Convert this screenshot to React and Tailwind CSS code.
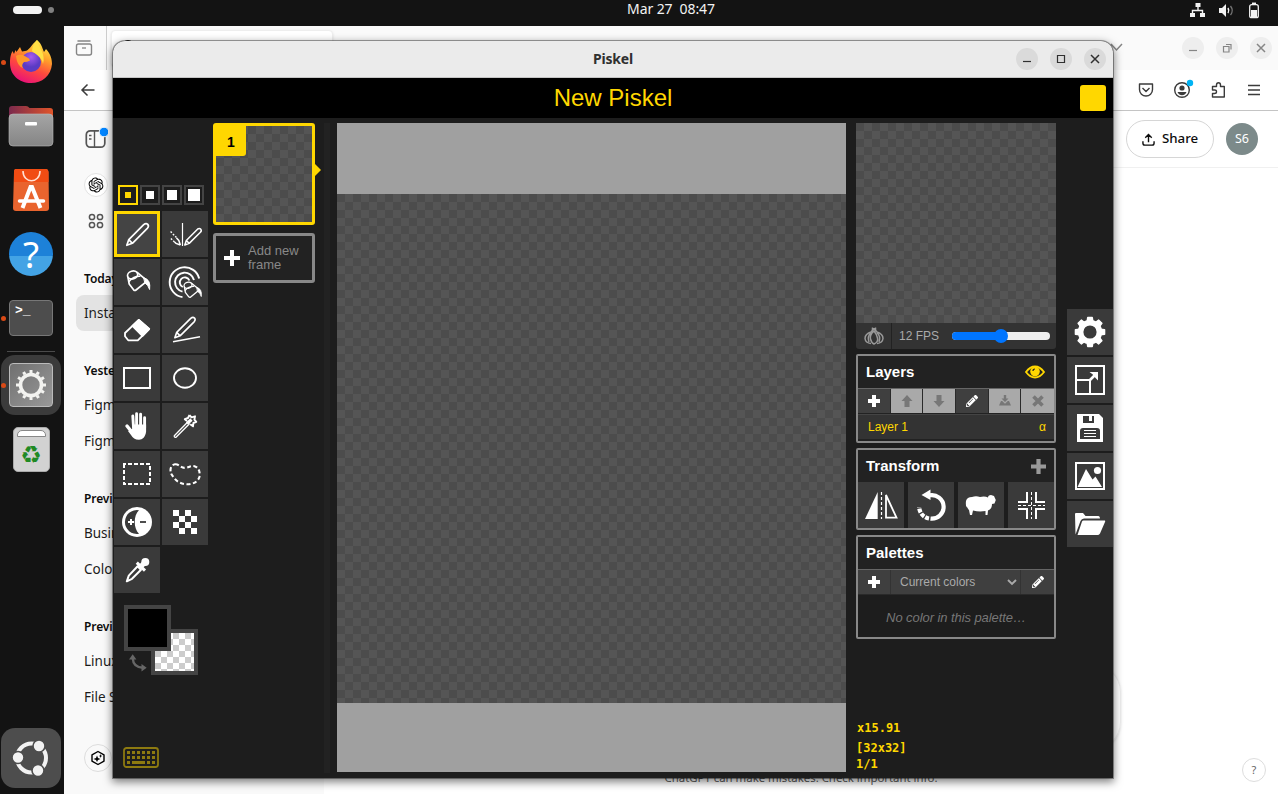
import React from 'react';
import { FaPencilAlt } from 'react-icons/fa';
import { RiOpenaiFill } from 'react-icons/ri';

const CHECK = 'bg-[conic-gradient(#555555_25%,#4c4c4c_0_50%,#555555_0_75%,#4c4c4c_0)] bg-[length:16px_16px]';

function Glyph({ size = 46, w, h, box, className = '', children }) {
  return (
    <svg width={w || size} height={h || size} viewBox={box || `0 0 ${w || size} ${h || size}`} fill="none" stroke="currentColor" className={`block shrink-0 ${className}`}>
      {children}
    </svg>
  );
}

const plus = <Glyph size={12}><path d="M6 0V12M0 6H12" strokeWidth="4" /></Glyph>;

const bucket = (
  <g strokeWidth="1.7" strokeLinejoin="round" strokeLinecap="round">
    <ellipse cx="18.6" cy="16" rx="5.2" ry="3.9" transform="rotate(-18 18.6 16)" />
    <path d="M14 18.5L15.2 25L19.6 30.8Q20.8 32 22 31L33.3 21.8L23.5 13.6" />
    <path d="M15 22.4Q19.500 17.200 25.800 17.300" strokeWidth="1.5" />
    <path d="M30 18.800Q37 20.500 35.6 30.500Q34.5 26.500 31 23.800Z" fill="currentColor" strokeWidth="1" />
  </g>
);

const pencil = (
  <path d="M12.8 34.3L14.8 28.6L29.7 13.7Q32 11.7 33.8 13.4Q35.3 15.3 33.3 17.4L18.4 32.3ZM14.8 28.6L18.4 32.3" strokeWidth="1.7" strokeLinejoin="round" />
);

const TOOLS = [
  ['pen', pencil],
  ['mirror', (
    <g>
      <path d="M20.5 12V35" strokeWidth="1.2" />
      <path d="M22.8 34L24.3 29.5L35.5 18.2Q37.3 16.8 38.7 18.1Q40 19.7 38.4 21.3L27.2 32.4ZM24.3 29.5L27.2 32.4" strokeWidth="1.5" strokeLinejoin="round" />
      <path d="M14.5 26.5L8.5 20.5M12.5 31L8.5 27" strokeWidth="1.4" strokeDasharray="1.8 1.5" />
      <path d="M18.4 34L16.8 29.5L14.5 27M18.4 34L14 32.4L12.5 31" strokeWidth="1.5" />
    </g>
  )],
  ['bucket', bucket],
  ['swap', (
    <g>
      <path d="M37.2 19.5A15 15 0 1 0 20.5 38.1" strokeWidth="1.9" />
      <path d="M32 21A9.6 9.6 0 1 0 20.5 32.6" strokeWidth="1.9" />
      <path d="M27.4 21.5A5 5 0 1 0 20.8 28" strokeWidth="1.9" />
      <g transform="translate(11.5,13.8) scale(.78)">
        <path d="M12.5 17Q13 11 20 11L34 21.5L21 33L14.500 25Z" fill="#3a3a3a" stroke="none" />{bucket}
      </g>
    </g>
  )],
  ['eraser', (
    <g strokeWidth="1.8" strokeLinejoin="round">
      <path d="M11 26L24.8 12.9L35.2 22L23.8 33.3H14.2L11 29.2Z" />
      <path d="M18.4 18.8L24.8 12.9L35.2 22L28.6 29Z" fill="currentColor" />
    </g>
  )],
  ['stroke', (
    <g>
      <g transform="translate(0.8,-1.5) scale(.94)">{pencil}</g>
      <path d="M11 34.8L38 29.8" strokeWidth="1.4" />
    </g>
  )],
  ['rect', <rect x="10" y="13" width="26" height="20" strokeWidth="2" />],
  ['circle', <ellipse cx="23" cy="23" rx="11" ry="9.7" strokeWidth="1.9" />],
  ['hand', (
    <g strokeLinecap="round" strokeWidth="2.9">
      <path d="M18.8 13L19.5 24M22.6 10.8V24M26.6 11.2V24M30.6 14.8V25" />
      <path d="M13 23L17.5 28.500" strokeWidth="3.4" />
      <path d="M18.100 21.5H32.1V28.500C31.500 34 28.5 36.7 25 36.7C21 36.7 18.800 35 17 32L14 28L18.1 26Z" fill="currentColor" stroke="none" />
    </g>
  )],
  ['wand', (
    <g strokeWidth="1.3" strokeLinejoin="round">
      <path d="M12.3 32.7L25.5 19.2L27.2 21L14 34.3Q12 34.8 12.3 32.7Z" />
      <path d="M27.5 12L29.5 14.3L33 13.3L32.4 16.7L34.3 18.8L31.4 20L31 23.3L28.2 21.3M25 18L22.8 16.2L26 15L27.5 12" strokeWidth="1.9" />
      <path d="M25 20.5L29.5 16.5" strokeWidth="3.2" />
    </g>
  )],
  ['rect-select', <rect x="10" y="13" width="26" height="20" strokeWidth="2" strokeDasharray="4 2" strokeDashoffset="2" />],
  ['lasso', <path d="M13 13.3C17 12.7 18.5 17 22.5 16.9C26.5 16.8 28.5 14.3 32.5 15.2C37 16.5 38.3 21.5 37.4 26C36 31 30.5 33.4 25 33.3C19 33 14.5 30.5 12 26.8C10 24 8.5 23 8.5 19C8.6 15.7 10.5 13.7 13 13.3Z" strokeWidth="2.1" strokeDasharray="4 2.5" />],
  ['lighten', (
    <g stroke="none">
      <circle cx="23" cy="23" r="15" fill="currentColor" />
      <path d="M25 11.3A11.9 11.9 0 1 0 25 34.7C19.3 29.5 19.3 16.5 25 11.3Z" fill="#3a3a3a" />
      <path d="M14 23H20M17 20V26" stroke="currentColor" strokeWidth="2" />
      <path d="M26 23H32" stroke="#3a3a3a" strokeWidth="1.8" />
    </g>
  )],
  ['dither', <path d="M11 11h6v6h-6zM23 11h6v6h-6zM17 17h6v6h-6zM29 17h6v6h-6zM11 23h6v6h-6zM23 23h6v6h-6zM17 29h6v6h-6zM29 29h6v6h-6z" fill="currentColor" stroke="none" />],
  ['picker', (
    <g>
      <path d="M12.8 34.3L14.8 28.6L23.6 19.3L27 22.7L18 31.8Z" strokeWidth="2" strokeLinejoin="round" />
      <path d="M22.8 15.6L31 23.6" strokeWidth="3" />
      <circle cx="31.3" cy="15" r="4" fill="currentColor" stroke="none" />
      <path d="M27 19.2L31 15.4" strokeWidth="5" />
    </g>
  )],
];

const ACTIONS = [
  ['settings', (
    <g>
      <circle cx="23" cy="23" r="9.4" strokeWidth="5.6" />
      {[0, 45, 90, 135, 180, 225, 270, 315].map((a) => <path key={a} d="M20.8 8.5H25.2L25.8 12.5H20.2Z" fill="currentColor" strokeWidth="1.6" strokeLinejoin="round" transform={`rotate(${a} 23 23)`} />)}
    </g>
  )],
  ['resize', (
    <g>
      <path d="M9 9H37V37H9ZM9 23H23V37" strokeWidth="2" />
      <path d="M22.5 23.5L28.5 17.5" strokeWidth="2.6" />
      <path d="M22.5 15H31V23.5L28.8 21.2L25.5 17.2Z" fill="currentColor" stroke="none" />
    </g>
  )],
  ['save', (
    <g stroke="none">
      <path d="M10 9H32L36 13V37H10Z" fill="currentColor" />
      <path d="M16 11H27V18H16ZM16 23H30Q33 23 33 26V34H13V26Q13 23 16 23Z" fill="#3a3a3a" />
      <path d="M22 11H25V16H22Z" fill="currentColor" />
      <path d="M17 25.5H29M17 28.5H29M17 31.5H29" stroke="currentColor" strokeWidth="1" />
    </g>
  )],
  ['export', (
    <g>
      <rect x="9" y="10" width="28" height="26" strokeWidth="2" />
      <path d="M10.5 34L19 16L25.5 26.5L28.5 23.5L35 34Z" fill="currentColor" stroke="none" />
      <circle cx="30.5" cy="17.5" r="3.6" fill="currentColor" stroke="none" />
    </g>
  )],
  ['open', (
    <g stroke="none" fill="currentColor">
      <path d="M8 13Q8 12 9 12H16L18.5 15H31.5Q33 15 33 17.5H17Q14.5 17.5 13.5 20L8.5 33.5Z" />
      <path d="M16.5 19.5H38Q38.5 20 38 21L33 32.5Q32 34 30.5 34H10.5L15 20.5Q15.5 19.5 16.5 19.5Z" />
    </g>
  )],
];

const TRANSFORMS = [
  ['flip', (
    <g>
      <path d="M7 37L19.7 10V37Z" fill="currentColor" stroke="none" />
      <path d="M28 13V35.7H38.5Z" strokeWidth="1.8" />
      <path d="M23.5 10V37" strokeDasharray="3 2" strokeWidth="1.2" />
    </g>
  )],
  ['rotate', (
    <g>
      <path d="M21.5 13.3A11.8 11.8 0 1 1 22.5 36.6" strokeWidth="4.2" />
      <path d="M21 36.5A11.8 11.8 0 0 1 11.2 25" strokeWidth="4.2" strokeDasharray="4 1.3" />
      <path d="M13.5 13L22.5 7.5V18Z" fill="currentColor" stroke="none" />
    </g>
  )],
  ['clone', <path d="M8 19Q9 15 14 15Q18 13.5 22 15Q27 14 30 15.5Q30 13 33 13L36 14L37.8 18L36.5 21.5L34 22Q34 27 30 28.5L29.5 33H27.5V29Q21 30 15 28.5L14 33H12L11 28Q8 25 9 23L8.5 25.5Q7.5 23 8 19Z" fill="currentColor" stroke="none" />],
  ['center', (
    <g>
      <path d="M10 20H19V10M28 10V20H37M10 27H19V37M28 37V27H37" strokeWidth="2" />
      <path d="M23.5 10V37M10 23.5H37" strokeWidth="1" strokeDasharray="3 2" />
    </g>
  )],
];

const LAYER_BUTTONS = [
  ['add', true, plus],
  ['up', false, <Glyph size={12}><path d="M6 0L11.5 6H8.5V12H3.5V6H.5Z" fill="currentColor" stroke="none" /></Glyph>],
  ['down', false, <Glyph size={12}><path d="M6 12L11.5 6H8.5V0H3.5V6H.5Z" fill="currentColor" stroke="none" /></Glyph>],
  ['edit', true, <FaPencilAlt size={12} />],
  ['merge', false, <Glyph size={12}><path d="M4.8 0H7.2V3.5H9.5L6 7L2.5 3.5H4.8ZM0 10.5L2 6H3.200L6 8.800L8.800 6H10L12 10.5Z" fill="currentColor" stroke="none" /></Glyph>],
  ['delete', false, <Glyph size={12}><path d="M1.5 1.5L10.5 10.5M10.5 1.5L1.5 10.5" strokeWidth="3.6" /></Glyph>],
];

const HISTORY = [
  ['Today', ['Insta']],
  ['Yeste', ['Figm', 'Figm']],
  ['Previ', ['Busin', 'Colo']],
  ['Previ', ['Linux', 'File S']],
];

function TopBar() {
  return (
    <header className="flex h-[26px] shrink-0 items-center bg-[#131313] text-[#f2f2f2]">
      <div className="flex w-[560px] items-center gap-[6px] pb-[6px] pl-[13px]">
        <div className="h-2 w-[29px] rounded-full bg-[#f2f2f2]" />
        <div className="size-[6px] rounded-full bg-[#808080]" />
      </div>
      <div className="w-[222px] pb-[9px] text-center text-[14px] leading-5 tracking-[-0.1px] whitespace-pre">Mar 27  08:47</div>
      <div className="ml-auto flex items-center gap-[13px] pr-[18px] pb-[6px]">
        <Glyph size={16}><path d="M5.5 1h5v4h-5zM0 11h5v4H0zM10 11h5v4h-5z" fill="currentColor" stroke="none" /><path d="M8 5V8.5M2.5 12V8.5H12.5V12" strokeWidth="1.4" /></Glyph>
        <Glyph size={16}><path d="M0 6H3L7 2V15L3 11H0Z" fill="currentColor" stroke="none" /><path d="M9 6Q10.5 8.5 9 11" strokeWidth="1.5" /><path d="M11.5 4Q15 8.5 11.5 13" stroke="#777" strokeWidth="1.3" /></Glyph>
        <Glyph w={12} h={17}><rect x="1.7" y="2.7" width="8.6" height="13" rx="2" strokeWidth="1.3" /><path d="M4 1.3H8" strokeWidth="1.5" /><rect x="3" y="8" width="6" height="7" fill="currentColor" stroke="none" /></Glyph>
      </div>
    </header>
  );
}

function DockItem({ running, active, className = '', children }) {
  return (
    <div className={`flex h-16 shrink-0 items-center ${className}`}>
      <span className={`mr-[-5px] ml-[1px] size-[5px] shrink-0 rounded-full ${running ? 'z-10 bg-[#d94a16]' : ''}`} />
      <div className={`flex size-[60px] items-center justify-center rounded-[14px] ${active ? 'bg-[#3b3b3b]' : ''}`}>{children}</div>
    </div>
  );
}

function Dock() {
  return (
    <nav className="flex w-16 shrink-0 flex-col bg-[#131313] pt-[4px]">
      <DockItem running>
        <Glyph size={44} box="0 0 44 44">
          <defs>
            <linearGradient id="fox" x1=".8" y1="0" x2=".35" y2="1"><stop offset="0" stopColor="#fff44f" /><stop offset=".35" stopColor="#ffa22a" /><stop offset=".65" stopColor="#ff4a3d" /><stop offset="1" stopColor="#e91278" /></linearGradient>
            <radialGradient id="globe" cx=".5" cy=".25"><stop offset="0" stopColor="#a95bed" /><stop offset="1" stopColor="#5a3bc4" /></radialGradient>
          </defs>
          <path d="M28 0C32 3 33 7 35 12L37 9C42 14 43 20 43 24C42 36 33 43 22 43C10 43 1 35 1 23C1 17 2 14 3.5 11L5 14L6.5 10L7.5 12L11 7L13 11.5L16 11C20 11 22 5 28 0Z" fill="url(#fox)" stroke="none" />
          <circle cx="22" cy="22" r="10" fill="url(#globe)" stroke="none" />
          <path d="M7 16Q9 14 14 15L20 18.5L21 20.5Q18 22 15 22Q12 25 14 28Q8 26 7 16Z" fill="#ff9a2b" stroke="none" />
          <path d="M28 0C30 8 37 14 34 24C33 17 26 14 23 11Q23 6 28 0Z" fill="#ffe045" stroke="none" />
        </Glyph>
      </DockItem>
      <DockItem>
        <Glyph size={46} box="0 0 46 46">
          <defs><linearGradient id="dir"><stop stopColor="#7b2a4d" /><stop offset="1" stopColor="#e1552a" /></linearGradient><linearGradient id="dirf" x2="0" y2="1"><stop stopColor="#a5a5a5" /><stop offset="1" stopColor="#858585" /></linearGradient></defs>
          <path d="M1 6Q1 3 4 3H18Q20 3 21.5 5H42Q45 5 45 8V20H1Z" fill="url(#dir)" stroke="none" />
          <rect x="1" y="11" width="44" height="32" rx="4" fill="url(#dirf)" stroke="#bbb" strokeWidth=".6" />
          <rect x="17" y="19" width="12" height="3.5" rx="1" fill="#fff" stroke="none" />
        </Glyph>
      </DockItem>
      <DockItem>
        <Glyph size={44} box="0 0 44 44">
          <path d="M7 1H37Q39 1 39.5 4L40 40Q40 43 37 43H7Q4 43 4 40L5 4Q5 1 7 1Z" fill="#e9642e" stroke="none" />
          <path d="M7 1H37Q39 1 39.5 4V14H5V4Q5 1 7 1Z" fill="#f14c13" stroke="none" />
          <path d="M14 3C14 16 31 16 31 3" stroke="#ffe1d3" strokeWidth="1.6" />
          <path d="M13.5 40L21.5 19H23L31.5 40" stroke="#fff" strokeWidth="4" />
          <path d="M10.5 33H34.5" stroke="#fff" strokeWidth="3.5" strokeLinecap="round" />
        </Glyph>
      </DockItem>
      <DockItem>
        <div className="flex size-11 items-center justify-center rounded-full bg-[linear-gradient(#1d81d8_0_55%,#43a3e5_55%)] pb-[2px] font-['Noto_Sans'] text-[37px] leading-none text-white">?</div>
      </DockItem>
      <DockItem running>
        <div className="h-9 w-11 rounded-[4px] border border-[#777] bg-[#4d4d4d] pt-px pl-[5px] font-['Liberation_Mono'] text-[13px] leading-[18px] font-bold text-white">&gt;_</div>
      </DockItem>
      <div className="mt-[1px] ml-[7px] h-px w-12 shrink-0 bg-[#4a4a4a]" />
      <DockItem running active className="mt-[1px]">
        <div className="flex size-11 items-center justify-center rounded-[4px] border border-[#bbb] bg-[linear-gradient(135deg,#707070,#999)] text-[#f3f3f0]">
          <Glyph size={32} box="0 0 32 32">
            <circle cx="16" cy="16" r="10.5" strokeWidth="3.6" />
            {[0, 30, 60, 90, 120, 150].map((a) => <path key={a} d="M16 1V4M16 28V31" strokeWidth="3" transform={`rotate(${a} 16 16)`} />)}
          </Glyph>
        </div>
      </DockItem>
      <DockItem>
        <div className="flex h-[45px] w-[37px] flex-col items-center rounded-[5px] border border-[#aaa] bg-[#d2d2d2] pt-[2px]">
          <div className="h-[7px] w-[29px] rounded-t-[5px] border border-[#888] bg-white" />
          <div className="mt-[5px] font-['DejaVu_Sans'] text-[24px] leading-[26px] text-[#1f8a24]">♻</div>
        </div>
      </DockItem>
      <div className="mt-auto mb-[6px] ml-[1px] flex size-[60px] items-center justify-center rounded-[14px] bg-[#4d4d4d] text-[#f2f2f2]">
        <Glyph size={40} box="0 0 40 40">
          <circle cx="20.5" cy="20" r="14.5" strokeWidth="4" />
          <g fill="currentColor" stroke="#4d4d4d" strokeWidth="1.6"><circle cx="7" cy="19.5" r="6" /><circle cx="28" cy="8" r="6" /><circle cx="27" cy="32.5" r="6" /></g>
        </Glyph>
      </div>
    </nav>
  );
}

function Browser() {
  return (
    <main className="flex min-w-0 flex-1 flex-col bg-white text-[#3b3b3b]">
      <div className="flex h-11 shrink-0 bg-[#fafafa]">
        <div className="flex w-[43px] items-center justify-center border-r border-[#ccc] pr-[2px] text-[#858585]">
          <Glyph size={18}><path d="M3 2H15" strokeWidth="1.5" strokeLinecap="round" /><rect x="1.5" y="5" width="15" height="11" rx="2" strokeWidth="1.4" /><path d="M7 9H11" strokeWidth="1.3" /></Glyph>
        </div>
        <div className="mt-1 ml-1 flex h-9 w-[222px] rounded border border-[#eee] bg-white pt-[9px] pl-[10px] shadow-sm"><span className="size-3 rounded-full bg-[#222]" /></div>
        <div className="mt-4 ml-auto flex gap-3 pr-[6px] text-[#858585]">
          <Glyph w={14} h={10} className="mr-[47px]"><path d="M2 2L7.5 8L13 2" strokeWidth="1.5" /></Glyph>
          <div className="-mt-[5px] flex gap-3">
            <div className="size-[22px] rounded-full bg-[#eee]"><Glyph size={22}><path d="M7 13.5H15" strokeWidth="1.2" /></Glyph></div>
            <div className="size-[22px] rounded-full bg-[#eee]"><Glyph size={22}><path d="M7.5 9.5H13V15H7.5ZM10 7.5H15V12.5" strokeWidth="1.2" /></Glyph></div>
            <div className="size-[22px] rounded-full bg-[#eee]"><Glyph size={22}><path d="M7 7L15 15M15 7L7 15" strokeWidth="1.5" /></Glyph></div>
          </div>
        </div>
      </div>
      <div className="flex h-[41px] shrink-0 items-center border-b border-[#c4c4c4] pr-4 pl-4">
        <Glyph size={16}><path d="M14.5 8H2M7.5 2.5L2 8L7.5 13.5" strokeWidth="1.5" /></Glyph>
        <div className="ml-auto flex items-center gap-5">
          <Glyph size={16}><path d="M1.5 2H14.5V7.5C14.5 11.5 11.5 14 8 14S1.5 11.5 1.5 7.5ZM4.5 6L8 9.5L11.5 6" strokeWidth="1.4" strokeLinejoin="round" /></Glyph>
          <Glyph size={16} className="overflow-visible"><circle cx="8" cy="8" r="7.3" strokeWidth="1.4" /><circle cx="8" cy="6" r="2.6" fill="currentColor" stroke="none" /><path d="M3.5 10H12.5Q11 13.3 8 13.3T3.5 10Z" fill="currentColor" stroke="none" /><circle cx="16" cy="1" r="3.2" fill="#00b3f4" stroke="none" /></Glyph>
          <Glyph size={16}><path d="M2.500 6V4.5H6.500V3Q6.500 .8 8.500 .8T10.500 3V4.5H14.300V15H2.500V11.5H4.500Q6.500 11.5 6.500 9.7T4.500 8H2.500V6" strokeWidth="1.4" strokeLinejoin="round" /></Glyph>
          <Glyph size={16}><path d="M2 3.5H14M2 8H14M2 12.5H14" strokeWidth="1.3" /></Glyph>
        </div>
      </div>
      <div className="flex min-h-0 flex-1">
        <aside className="flex w-[260px] flex-col bg-[#f9f9f9]">
          <div className="flex h-[152px] shrink-0 flex-col items-start pt-[16px] pl-[20px] text-[#555]">
            <Glyph size={24}><rect x="2.3" y="3.8" width="18.5" height="16.4" rx="4" strokeWidth="1.7" /><path d="M10.5 4V20M5 8.5H7.5M5 12H7.5" strokeWidth="1.4" /><circle cx="20" cy="5" r="4.8" fill="#0285ff" stroke="#f9f9f9" /></Glyph>
            <div className="mt-[22px] flex size-6 items-center justify-center rounded-full border border-[#e3e3e3] bg-white text-black"><RiOpenaiFill size={18} /></div>
            <Glyph size={24} className="mt-[12px]"><g strokeWidth="1.5"><circle cx="8" cy="8" r="2.6" /><circle cx="16" cy="8" r="2.6" /><circle cx="8" cy="16" r="2.6" /><circle cx="16" cy="16" r="2.6" /></g></Glyph>
          </div>
          <div className="flex flex-col gap-6 pl-3">
            {HISTORY.map(([title, items], i) => (
              <section key={i}>
                <h3 className="flex h-8 items-center pl-2 text-[12px] font-semibold tracking-[-.1px] text-[#0d0d0d]">{title}</h3>
                {items.map((t, j) => (
                  <p key={j} className={`flex h-9 items-center rounded-lg pl-2 text-[13.5px] text-[#1c1c1c] ${i === 0 ? 'bg-[#e3e3e3]' : ''}`}>{t}</p>
                ))}
              </section>
            ))}
          </div>
          <div className="mt-auto mb-[22px] ml-5 flex size-7 items-center justify-center rounded-full border border-[#ddd] text-black">
            <Glyph size={16}><path d="M8 1.5L14 4.8V11.2L8 14.5L2 11.2V4.8Z" strokeWidth="1.4" strokeLinejoin="round" /><path d="M7 5.5L8 8L10.5 9L8 10L7 12L6 10L3.5 9L6 8ZM10.5 4L11 5.5L12.5 6L11 6.5L10.5 8L10 6.5L9 6L10 5.5Z" fill="currentColor" stroke="none" /></Glyph>
          </div>
        </aside>
        <section className="flex flex-1 flex-col">
          <div className="flex h-[57px] items-center justify-end gap-3 border-b border-[#f0f0f0] pr-5 text-[#0d0d0d]">
            <div className="flex h-[38px] w-[88px] items-center justify-center gap-[7px] rounded-full border border-[#d6d6d6] text-[13.3px] font-medium">
              <Glyph size={13} box="0 0 14 14"><path d="M7 10V2M3.5 5L7 1.5L10.5 5M1 9V11Q1 13 3 13H11Q13 13 13 11V9" strokeWidth="1.5" /></Glyph>Share
            </div>
            <div className="flex size-8 items-center justify-center rounded-full bg-[#7c8a8a] text-[12.5px] text-white">S6</div>
          </div>
          <div className="mt-auto flex h-[130px] flex-col items-center">
            <div className="h-[86px] w-[640px] shrink-0 rounded-[28px] border border-[#eee] shadow-sm" />
            <p className="mt-[20px] text-[11.4px] leading-4 text-[#5d5d5d]">ChatGPT can make mistakes. Check important info.</p>
            <div className="-mt-[28px] mr-3 flex size-6 shrink-0 items-center justify-center self-end rounded-full border border-[#ddd] text-[11px] text-[#666]">?</div>
          </div>
        </section>
      </div>
    </main>
  );
}

function Tools() {
  return (
    <div className="flex w-[98px] shrink-0 flex-col pl-px">
      <div className="mt-[67px] flex gap-[2px] pl-1">
        <div className="flex size-5 items-center justify-center border-2 border-[gold]"><i className="size-[6px] bg-[gold]" /></div>
        <div className="flex size-5 items-center justify-center border-2 border-[#444]"><i className="size-2 bg-white" /></div>
        <div className="flex size-5 items-center justify-center border-2 border-[#444]"><i className="size-[10px] bg-white" /></div>
        <div className="flex size-5 items-center justify-center border-2 border-[#444]"><i className="size-3 bg-white" /></div>
      </div>
      <div className="mt-[6px] grid grid-cols-[46px_46px] gap-[2px]">
        {TOOLS.map(([name, icon], i) => (
          <button key={name} aria-label={name} className={`size-[46px] text-white ${i === 0 ? 'bg-[#444] shadow-[inset_0_0_0_3px_gold]' : 'bg-[#3a3a3a]'}`}><Glyph>{icon}</Glyph></button>
        ))}
      </div>
      <div className="relative mt-3 ml-[10px] h-[70px] w-[74px]">
        <div className="absolute top-6 left-[27px] h-[46px] w-[47px] border-4 border-[#444] bg-[conic-gradient(#ccc_25%,#fff_0_50%,#ccc_0_75%,#fff_0)] bg-[length:12px_12px]" />
        <div className="absolute top-0 left-0 h-[46px] w-[47px] border-4 border-[#444] bg-black" />
        <Glyph size={18} className="absolute top-[49px] left-[5px] text-[#666]"><path d="M3.7 4C4 10 7 13.5 14 13.7" strokeWidth="2.4" /><path d="M0 5.5L3.7 .3L7.4 5.5ZM12.5 10L17.7 13.7L12.5 17.4Z" fill="currentColor" stroke="none" /></Glyph>
      </div>
      <Glyph w={36} h={21} className="mt-auto mb-[10px] ml-[9px] text-[#8d7a10]">
        <rect x="1" y="1" width="34" height="19" rx="2.5" strokeWidth="1.8" />
        <path d="M4 5.5H32M4 10.5H32" strokeWidth="3" strokeDasharray="3 2" /><path d="M4 15.5H7M9 15.5H22M24 15.5H27M29 15.5H32" strokeWidth="3" />
      </Glyph>
    </div>
  );
}

function Frames() {
  return (
    <div className="flex w-[111px] shrink-0 flex-col gap-2 pt-[5px] pl-[2px]">
      <div className={`relative size-[102px] rounded-[3px] border-3 border-[gold] bg-origin-padding ${CHECK}`}>
        <div className="flex size-[30px] items-center justify-center rounded-br-[3px] bg-[gold] pt-[2px] text-[14px] font-bold text-black">1</div>
        <i className="absolute top-[38px] -right-[9px] border-y-6 border-l-6 border-y-transparent border-l-[gold]" />
      </div>
      <button className="flex h-[50px] w-[102px] items-center gap-2 rounded-[3px] border-3 border-[#888] bg-[#222] pl-2 text-left text-[13px] leading-[14px] text-[#888]">
        <Glyph size={16} className="text-white"><path d="M8 0V16M0 8H16" strokeWidth="4" /></Glyph>
        <span>Add new frame</span>
      </button>
    </div>
  );
}

function Panel({ title, icon, className, children }) {
  return (
    <section className={`flex flex-col rounded-[2px] border-2 border-[#888] bg-[#222] ${className}`}>
      <h3 className="flex h-8 shrink-0 items-center justify-between pr-2 pl-2 text-[15px] font-bold text-white">{title}{icon}</h3>
      {children}
    </section>
  );
}

function RightColumn() {
  return (
    <div className="flex w-[200px] shrink-0 flex-col pt-[5px]">
      <div className={`h-[200px] ${CHECK}`} />
      <div className="flex h-[26px] items-center rounded-b-[3px] bg-[#333] text-[12px] text-[#aaa]">
        <div className="flex h-full w-9 items-center justify-center border-r border-[#222] text-[#999]">
          <Glyph size={20}><path d="M8.5 1.5Q9 5 7 6Q1 8 1 12.5Q1.5 17 7 17.5M11.5 1.5Q11 5 13 6Q19 8 19 12.5Q18.5 17 13 17.5M10 2V5Q5.5 9 6.5 13T10 18Q14.5 16 13.5 12T10 5M7 7Q3 10 5 16M13 7Q17 10 15 16" strokeWidth="1.5" /></Glyph>
        </div>
        <span className="ml-[7px] w-[53px]">12 FPS</span>
        <div className="flex h-2 w-[98px] items-center rounded-full bg-[#efefef]"><div className="h-2 w-[50px] rounded-full bg-[#0075ff]" /><div className="-ml-2 size-[14px] rounded-full bg-[#0075ff]" /></div>
      </div>
      <Panel title="Layers" className="mt-[5px] h-[89px]" icon={<Glyph w={20} h={14} className="mr-px text-[gold]"><path d="M1 7Q5 1.5 10 1.5T19 7Q15 12.5 10 12.5T1 7Z" strokeWidth="1.8" /><circle cx="10" cy="6.5" r="4.8" fill="currentColor" stroke="none" /><path d="M8 6Q8 4 10 4" stroke="#222" strokeWidth="1.2" /></Glyph>}>
        <div className="grid h-[26px] shrink-0 grid-cols-[32px_31px_32px_32px_31px_33px] gap-px border-t border-b border-t-[#666] border-b-[#222] bg-[#2a2a2a]">
          {LAYER_BUTTONS.map(([name, on, icon]) => (
            <button key={name} aria-label={name} className={`flex items-center justify-center ${on ? 'bg-[#3f3f3f] text-white' : 'bg-[#a9a9a9] text-[#777]'}`}>{icon}</button>
          ))}
        </div>
        <div className="flex h-[25px] shrink-0 items-center justify-between border-t border-[#444] bg-[#333] pr-2 pl-[10px] text-[12px] text-[gold]"><span>Layer 1</span><span>α</span></div>
      </Panel>
      <Panel title="Transform" className="mt-[5px] h-[82px]" icon={<Glyph size={15} className="text-[#999]"><path d="M7.5 0V15M0 7.5H15" strokeWidth="4.2" /></Glyph>}>
        <div className="flex gap-1 bg-[#1d1d1d]">
          {TRANSFORMS.map(([name, icon]) => <button key={name} aria-label={name} className="size-[46px] bg-[#3a3a3a] text-white"><Glyph>{icon}</Glyph></button>)}
        </div>
      </Panel>
      <Panel title="Palettes" className="mt-[5px] h-[104px]">
        <div className="grid h-[26px] shrink-0 grid-cols-[32px_129px_33px] gap-px border-t border-b border-t-[#666] border-b-[#2a2a2a] bg-[#333] text-white">
          <button aria-label="add palette" className="flex items-center justify-center bg-[#3f3f3f]">{plus}</button>
          <div className="flex items-center justify-between bg-[#3f3f3f] pr-[3px] pl-[9px] text-[12px] text-[#aaa]">Current colors<Glyph size={10}><path d="M1 3L5 7L9 3" strokeWidth="1.9" /></Glyph></div>
          <button aria-label="edit palette" className="flex items-center justify-center bg-[#3f3f3f]"><FaPencilAlt size={12} /></button>
        </div>
        <p className="flex flex-1 items-center justify-center bg-[#1d1d1d] pt-1 text-[13px] tracking-[-.07px] text-[#777] italic">No color in this palette…</p>
      </Panel>
      <div className="mt-auto pb-[6px] pl-px font-['DejaVu_Sans_Mono'] text-[12px] leading-4 font-bold text-[gold]">
        <p className="mb-1">x15.91</p><p className="-ml-px">[32x32]</p><p className="-ml-px">1/1</p>
      </div>
    </div>
  );
}

function PiskelWindow() {
  return (
    <div className="absolute top-[41px] left-[113px] flex h-[737px] w-[1000px] flex-col rounded-t-[12px] bg-[#1d1d1d] font-['Liberation_Sans',sans-serif] shadow-[0_0_0_1px_rgba(0,0,0,.35),0_3px_9px_1px_rgba(0,0,0,.5)]">
      <div className="grid h-[37px] shrink-0 grid-cols-3 items-center rounded-t-[12px] border-b border-[#c5c5c5] bg-[#ebebeb] text-[#303030]">
        <span />
        <h1 className="pb-[2px] text-center font-['Noto_Sans'] text-[14px] font-bold tracking-[-.15px]">Piskel</h1>
        <div className="flex justify-end gap-3 pr-[7px]">
          <div className="size-[22px] rounded-full bg-[#dadada]"><Glyph size={22}><path d="M7 13.5H15" strokeWidth="1.2" /></Glyph></div>
          <div className="size-[22px] rounded-full bg-[#dadada]"><Glyph size={22}><path d="M7.5 7.5H14.5V14.5H7.5Z" strokeWidth="1.2" /></Glyph></div>
          <div className="size-[22px] rounded-full bg-[#dadada]"><Glyph size={22}><path d="M7 7L15 15M15 7L7 15" strokeWidth="1.5" /></Glyph></div>
        </div>
      </div>
      <div className="grid h-10 shrink-0 grid-cols-3 items-center bg-black pr-[7px] pl-[7px]">
        <span />
        <h2 className="text-center text-[24px] leading-none text-[gold]">New Piskel</h2>
        <div className="size-[26px] justify-self-end rounded-[3px] bg-[gold]" />
      </div>
      <div className="flex min-h-0 flex-1">
        <Tools />
        <Frames />
        <div className="mt-[5px] mb-[5px] ml-[2px] w-[6px] shrink-0 bg-[#222]" />
        <div className="mt-[5px] mr-[10px] mb-[6px] ml-[7px] flex w-[509px] shrink-0 flex-col bg-[#a0a0a0]">
          <div className={`mt-[71px] h-[509px] ${CHECK}`} />
        </div>
        <RightColumn />
        <div className="mt-[191px] ml-auto flex flex-col gap-[2px]">
          {ACTIONS.map(([name, icon]) => <button key={name} aria-label={name} className="size-[46px] bg-[#3a3a3a] text-white"><Glyph>{icon}</Glyph></button>)}
        </div>
      </div>
    </div>
  );
}

export default function App() {
  return (
    <div className="relative flex h-[794px] w-[1278px] flex-col overflow-hidden font-['Noto_Sans',sans-serif]">
      <TopBar />
      <div className="flex min-h-0 flex-1">
        <Dock />
        <Browser />
      </div>
      <PiskelWindow />
    </div>
  );
}
